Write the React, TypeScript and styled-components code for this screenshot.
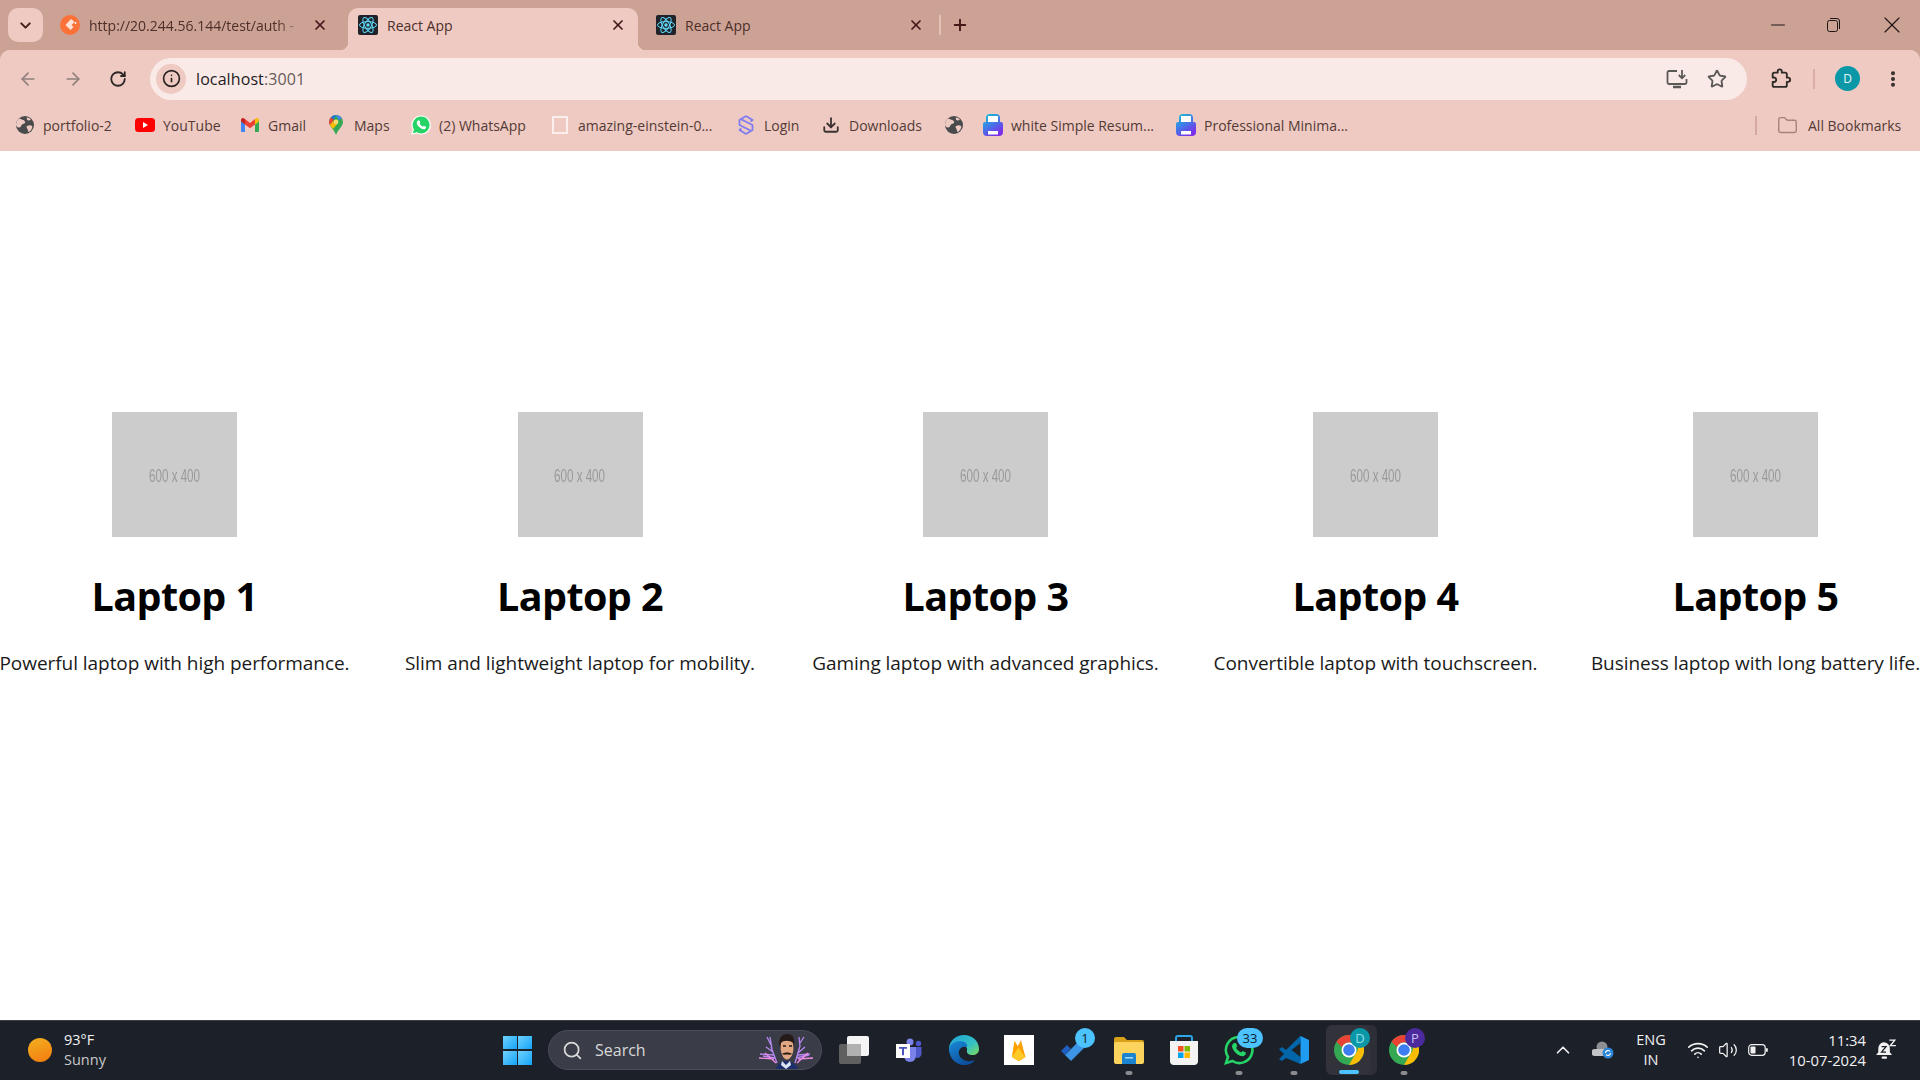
import React from "react";
import styled, { createGlobalStyle } from "styled-components";
import {
  ArrowLeft, ArrowRight, RotateCw, Star, X, Plus, Minus, Info, ChevronDown, ChevronUp,
  Search as SearchIcon, Wifi, Volume2, Download, Folder, MoreVertical,
} from "lucide-react";

const UI = `"Open Sans", "Noto Sans", sans-serif`;

const Global = createGlobalStyle`
  html, body { margin: 0; padding: 0; background: #fff; overflow: hidden; }
  * { box-sizing: border-box; }
  body { font-family: ${UI}; }
`;

const Screen = styled.div`
  width: 1920px; height: 1080px; display: flex; flex-direction: column; overflow: hidden;
`;

/* ---------- tab strip ---------- */
const TabStrip = styled.div`
  height: 50px; background: #cca295; display: flex; align-items: flex-end; padding-left: 8px; flex: none;
`;
const TabSearch = styled.div`
  width: 35px; height: 34px; margin: 0 7px 8px 0; border-radius: 10px; background: #eecac2;
  display: flex; align-items: center; justify-content: center; color: #44211c;
`;
const Tab = styled.div<{ $active?: boolean }>`
  position: relative; width: 290px; height: 42px; margin-right: 8px; padding: 0 12px 8px 10px;
  display: flex; align-items: center; gap: 9px; border-radius: 10px 10px 0 0;
  background: ${(p) => (p.$active ? "#eecac2" : "transparent")};
  ${(p) => p.$active && `
    &::before, &::after { content: ""; position: absolute; bottom: 0; width: 8px; height: 8px; }
    &::before { left: -8px; background: radial-gradient(circle at 0 0, transparent 8px, #eecac2 8.5px); }
    &::after { right: -8px; background: radial-gradient(circle at 100% 0, transparent 8px, #eecac2 8.5px); }
  `}
`;
const TabTitle = styled.span<{ $fade?: boolean }>`
  flex: 1; font-size: 14px; color: #4d2f2a; white-space: nowrap; overflow: hidden; min-width: 0;
  ${(p) => p.$fade && `-webkit-mask-image: linear-gradient(90deg, #000 88%, transparent 100%); mask-image: linear-gradient(90deg, #000 88%, transparent 100%);`}
`;
const TabClose = styled.span`
  display: flex; width: 16px; color: #45191a; justify-content: center;
`;
const TabSep = styled.div`
  width: 2px; height: 20px; background: #e3bfb6; margin: 0 0 15px -5px;
`;
const NewTab = styled.div`
  display: flex; color: #45191a; margin: 0 0 16px 10px;
`;
const WinControls = styled.div`
  margin-left: auto; display: flex; align-self: stretch; align-items: center; color: #1f1614; padding-right: 22px; gap: 43px;
`;
const WinBtn = styled.span`
  display: flex; width: 13px; height: 13px; align-items: center; justify-content: center;
  svg { flex: none; }
  &:last-child { margin-left: 2px; }
`;

/* ---------- toolbar ---------- */
const Toolbar = styled.div`
  height: 50px; background: #eecac2; display: flex; align-items: center; padding: 7px 0 0 5px; flex: none;
`;
const ToolbarTop = styled.div`
  background: #cca295; flex: none;
`;
const ToolbarShape = styled.div`
  background: #eecac2; border-radius: 10px 10px 0 0; overflow: hidden;
`;
const NavBtn = styled.div<{ $muted?: boolean }>`
  width: 45px; display: flex; justify-content: center; color: ${(p) => (p.$muted ? "#907f7b" : "#2c2624")};
`;
const Omnibox = styled.div`
  margin-left: 10px; width: 1597px; height: 42px; border-radius: 21px; background: #f9eae7;
  display: flex; align-items: center; padding: 0 20px 0 6px;
`;
const InfoChip = styled.div`
  width: 30px; height: 30px; border-radius: 50%; background: #eecac2; display: flex; align-items: center; justify-content: center;
  color: #2a2422; margin-right: 10px;
`;
const Url = styled.div`
  flex: 1; font-size: 16px; color: #1f1b22; letter-spacing: 0.1px;
  span { color: #675a58; }
`;
const OmniIcon = styled.div`
  width: 20px; margin-left: 20px; display: flex; justify-content: center; color: #5c5856;
  svg { flex: none; }
`;
const RightIcon = styled.div<{ $ml: number }>`
  width: 20px; margin-left: ${(p) => p.$ml}px; display: flex; justify-content: center; color: #2e2a28;
`;
const ToolSep = styled.div`
  width: 2px; height: 20px; background: #d9aea4; margin-left: 22px;
`;
const Avatar = styled.div`
  width: 25px; height: 25px; border-radius: 50%; background: #0a98a8; color: #e9f8f8; font-size: 12px;
  display: flex; align-items: center; justify-content: center; margin-left: 20px;
`;

/* ---------- bookmarks ---------- */
const Bookmarks = styled.div`
  height: 51px; background: #eecac2; display: flex; align-items: center; padding: 0 0 1px 15px; flex: none;
`;
const Bookmark = styled.div<{ $w: number }>`
  width: ${(p) => p.$w}px; display: flex; align-items: center; gap: 8px; flex: none;
  font-size: 14px; color: #543a36; white-space: nowrap;
`;
const BmIcon = styled.span`
  width: 20px; height: 20px; display: flex; align-items: center; justify-content: center; flex: none;
`;
const BmSep = styled.div`
  width: 2px; height: 19px; background: #d4a99f; margin-left: auto; margin-right: 20px;
`;
const AllBm = styled.div`
  display: flex; align-items: center; gap: 10px; width: 143px; font-size: 14px; color: #543a36;
  svg { color: #a5837b; }
`;

/* ---------- page ---------- */
const Main = styled.main`
  flex: 1; display: flex; justify-content: space-between; align-items: flex-start; padding-top: 261px; background: #fff;
`;
const Card = styled.article<{ $w: number }>`
  width: ${(p) => p.$w}px; flex: none; display: flex; flex-direction: column; align-items: center; text-align: center;
`;
const Placeholder = styled.div`
  width: 125px; height: 125px; background: #cccccc; color: #999999; display: flex; align-items: center; justify-content: center;
  font-family: "Liberation Sans", sans-serif; font-size: 18px;
  span { display: block; transform: scaleX(0.645); white-space: nowrap; margin-top: 3px; }
`;
const CardTitle = styled.h2`
  margin: 32px 0 0; font-size: 39.5px; line-height: 54px; font-weight: 700; color: #000; white-space: nowrap; letter-spacing: -0.6px;
`;
const CardText = styled.p`
  margin: 27px 0 0; font-size: 19px; line-height: 27px; color: #1a1a1a; white-space: nowrap; letter-spacing: -0.05px;
`;

/* ---------- taskbar ---------- */
const Taskbar = styled.footer`
  height: 60px; flex: none; background: #1c2029; border-top: 1px solid #3b3e46; display: flex; align-items: center; padding-bottom: 1px;
`;
const Weather = styled.div`
  display: flex; align-items: center; width: 490px; padding-left: 28px; gap: 12px; flex: none;
`;
const Sun = styled.div`
  width: 24px; height: 24px; border-radius: 50%; background: linear-gradient(160deg, #f2b01f, #f47a10);
`;
const WeatherText = styled.div`
  font-size: 14.5px; line-height: 20px; color: #f2f2f2; padding-bottom: 1px;
  small { display: block; font-size: 14.5px; color: #c8c8c8; }
`;
const StartCell = styled.div`
  width: 58px; display: flex; justify-content: center; padding-right: 3px; flex: none;
`;
const StartGrid = styled.div`
  width: 29px; height: 29px; display: grid; grid-template-columns: 1fr 1fr; gap: 1.5px;
  i { display: block; background: linear-gradient(135deg, #6fd2fb, #15a3f8); }
`;
const SearchBox = styled.div`
  width: 274px; height: 40px; border-radius: 20px; background: #3a3d47; border: 1px solid #4b4e57; display: flex; align-items: center;
  padding-left: 13px; color: #d8d8d8; font-size: 16px; gap: 12px; flex: none; overflow: hidden;
`;
const Tesla = styled.span`
  margin-left: auto; display: flex; margin-right: 6px;
`;
const Apps = styled.div`
  display: flex; align-items: center; margin-left: 4px; height: 100%; flex: none;
`;
const AppCell = styled.div<{ $active?: boolean }>`
  position: relative; width: 55px; height: 100%; display: flex; align-items: center; justify-content: center;
  ${(p) => p.$active && `
    &::before { content: ""; position: absolute; left: 7px; width: 49px; top: 4px; bottom: 4px; border-radius: 6px; background: #2e2f36; }
    &::after { content: ""; position: absolute; left: 5px; width: 44px; top: 4px; bottom: 4px; border-radius: 6px; background: #32333a; }
  `}
  svg { position: relative; z-index: 1; }
`;
const Running = styled.span<{ $active?: boolean }>`
  position: absolute; z-index: 2; bottom: ${(p) => (p.$active ? 5 : 4)}px; height: 4px; border-radius: 2px; left: 50%; transform: translateX(-50%);
  width: ${(p) => (p.$active ? 20 : 7)}px; background: ${(p) => (p.$active ? "#4cc2ff" : "#8a8b8e")};
`;
const Badge = styled.span<{ $bg: string; $color?: string; $wide?: boolean }>`
  position: absolute; z-index: 2; top: 7px; right: ${(p) => (p.$wide ? "3px" : "6px")}; height: 20px; min-width: ${(p) => (p.$wide ? "26px" : "20px")};
  border-radius: 10px; background: ${(p) => p.$bg}; color: ${(p) => p.$color || "#10202c"}; font-size: 13px;
  display: flex; align-items: center; justify-content: center;
`;
const Tray = styled.div`
  margin-left: auto; display: flex; align-items: center; color: #f2f2f2; flex: none; height: 100%; padding-right: 14px;
`;
const TrayIcon = styled.span<{ $w: number }>`
  width: ${(p) => p.$w}px; display: flex; justify-content: center;
  svg { flex: none; }
`;
const Lang = styled.div`
  width: 50px; text-align: center; font-size: 14.5px; line-height: 20px; color: #f2f2f2;
`;
const Clock = styled.div`
  width: 86px; text-align: right; font-size: 14.8px; line-height: 20px; color: #f2f2f2; white-space: nowrap; padding-bottom: 1px;
  display: flex; flex-direction: column; align-items: flex-end;
`;

/* ---------- drawings ---------- */
const ReactFav = () => (
  <svg width="20" height="20" viewBox="0 0 20 20">
    <rect width="20" height="20" rx="2" fill="#20232a" />
    <g fill="none" stroke="#61dafb" strokeWidth="1">
      <ellipse cx="10" cy="10" rx="8.5" ry="3.4" />
      <ellipse cx="10" cy="10" rx="8.5" ry="3.4" transform="rotate(60 10 10)" />
      <ellipse cx="10" cy="10" rx="8.5" ry="3.4" transform="rotate(120 10 10)" />
    </g>
    <circle cx="10" cy="10" r="1.7" fill="#61dafb" />
  </svg>
);
const OrangeFav = () => (
  <svg width="20" height="20" viewBox="0 0 20 20">
    <circle cx="10" cy="10" r="10" fill="#fb7239" />
    <path d="M11 4 5.5 10l5 5 3-3-2-2 3-3z" fill="#fde3d6" />
    <path d="M13 3l6 7-6 6 2 1 5-7-5-8z" fill="#fb7239" />
    <circle cx="15.5" cy="8" r="1" fill="#fff" />
  </svg>
);
const Globe = () => (
  <svg width="20" height="20" viewBox="0 0 20 20">
    <circle cx="10" cy="10" r="9" fill="#494b4d" />
    <path d="M4 3.500c2 1 5 1 6 3s-2 2-3 3-1 3-3 3-3-2-3-3 1-4.500 3-6zM12 11c2-1 4-1 5 0s-1 5-3 6c-1 0-1-2-1.500-3s-1.500-2-.5-3zM12 2.500c2 0 3 1 4 2.500l-3 .5c-1-.5-1.500-2-1-3z" fill="#eecac2" />
  </svg>
);
const YouTube = () => (
  <svg width="20" height="14" viewBox="0 0 20 14">
    <rect width="20" height="14" rx="3.500" fill="#f00" />
    <path d="M8 4l5 3-5 3z" fill="#fff" />
  </svg>
);
const Gmail = () => (
  <svg width="18" height="14" viewBox="0 0 18 14">
    <path d="M0 2.500V13a1 1 0 0 0 1 1h3V6.500z" fill="#4285f4" />
    <path d="M18 2.500V13a1 1 0 0 1-1 1h-3V6.500z" fill="#34a853" />
    <path d="M14 1v5.500l4-3V2c0-1.800-2-2.500-3-1.500z" fill="#fbbc04" />
    <path d="M4 6.500V1l5 4 5-4v5.500L9 10.300z" fill="#ea4335" />
    <path d="M0 2v1.500l4 3V1L3 .500C2-.500 0 .200 0 2z" fill="#c5221f" />
  </svg>
);
const Maps = () => (
  <svg width="14" height="20" viewBox="0 0 14 20">
    <path d="M7 0a7 7 0 0 1 7 7c0 4.500-5 7-7 13C5 14 0 11.500 0 7a7 7 0 0 1 7-7z" fill="#34a853" />
    <path d="M2 2.200A7 7 0 0 1 7 0l-2.300 4.700-2.500-2z" fill="#1a73e8" />
    <path d="M7 0a7 7 0 0 1 6 3.500L9.500 5z" fill="#4285f4" />
    <path d="M2 2.200 5 5 .8 10A7 7 0 0 1 2 2.200z" fill="#ea4335" />
    <path d="M.8 10 5 5a2.500 2.500 0 1 0 4 3l-5 6c-1-1.500-2.400-2.500-3.200-4z" fill="#fbbc04" />
    <circle cx="7" cy="7" r="2.400" fill="#fdd86a" />
  </svg>
);
const WhatsAppMini = () => (
  <svg width="20" height="20" viewBox="0 0 20 20">
    <path d="M10 1a9 9 0 0 0-7.700 13.500L1 19l4.700-1.200A9 9 0 1 0 10 1z" fill="#25d366" stroke="#fff" strokeWidth="1.200" />
    <path d="M7.300 5.500c-.5 0-1.500.8-1.500 2.200s1 3 2.500 4.400 3.300 2.200 4.500 2.200 2.200-1 2.200-1.800v-.7l-2.200-1.100-.9 1.100c-1-.4-2.800-2-3.300-3.200l.8-1-.9-2.100z" fill="#fff" />
  </svg>
);
const Blank = () => (
  <svg width="16" height="18" viewBox="0 0 16 18"><rect x="1" y="1" width="14" height="16" fill="none" stroke="#fbf3f1" strokeWidth="1.800" /></svg>
);
const LoginFav = () => (
  <svg width="16" height="20" viewBox="0 0 16 20" fill="none" stroke="#7f7cf0" strokeWidth="1.800" strokeLinejoin="round">
    <path d="M8 1 1.500 5v5l11 5.500M8 19l6.500-4v-5L3.500 4.500" />
    <path d="M8 1l6.500 4-2 1.500M8 19l-6.500-4 2-1.500" />
  </svg>
);
const DocFav = () => (
  <svg width="20" height="22" viewBox="0 0 20 22">
    <defs>
      <linearGradient id="df" x1="0" y1="0" x2="0.6" y2="1">
        <stop offset="0" stopColor="#14c8d0" />
        <stop offset="0.5" stopColor="#3d7fe8" />
        <stop offset="1" stopColor="#7c2fe8" />
      </linearGradient>
    </defs>
    <path d="M3 8V4a4 4 0 0 1 4-4h6a4 4 0 0 1 4 4v4h1a2 2 0 0 1 2 2v8a4 4 0 0 1-4 4H4a4 4 0 0 1-4-4v-8a2 2 0 0 1 2-2z" fill="url(#df)" />
    <rect x="5" y="2" width="10" height="6" fill="#fff" />
    <rect x="5" y="17" width="10" height="3.500" fill="#fff" />
  </svg>
);
const InstallIcon = () => (
  <svg width="22" height="20" viewBox="0 0 22 20" fill="none" stroke="currentColor" strokeWidth="1.800">
    <path d="M11 2H3a1.500 1.500 0 0 0-1.500 1.500v10A1.500 1.500 0 0 0 3 15h16a1.500 1.500 0 0 0 1.500-1.500V10" />
    <path d="M7 18h8" strokeWidth="2.500" />
    <path d="M16 1v8M12.800 6l3.200 3.300L19.200 6" />
  </svg>
);
const PuzzleIcon = () => (
  <svg width="21" height="21" viewBox="0 0 24 24" fill="none" stroke="currentColor" strokeWidth="2.200" strokeLinejoin="round">
    <path d="M20.500 11H19V7a2 2 0 0 0-2-2h-4V3.500a2.500 2.500 0 0 0-5 0V5H4a2 2 0 0 0-2 2v3.800h1.500a2.700 2.700 0 0 1 0 5.400H2V20a2 2 0 0 0 2 2h13a2 2 0 0 0 2-2v-4h1.500a2.500 2.500 0 0 0 0-5z" />
  </svg>
);
const TeslaArt = () => (
  <svg width="58" height="38" viewBox="0 0 58 38" fill="none">
    <g stroke="#b88af5" strokeWidth="1.300">
      <path d="M20 32 14 16M16 21l-7-5M15 18l-2-12M18 27 6 25M17 24l-14-1M14 14l-4-8" />
      <path d="M38 32l5-17M41 22l7-6M43 16l-1-10M39 27l13-3M41 24l12-1M43 12l4-6" />
    </g>
    <g stroke="#f08ce8" strokeWidth="1.300">
      <path d="M19 32 8 22M40 32l11-10M17 28 2 27M41 28l15-1" />
    </g>
    <path d="M19 38c1-5 5-8 10-8s11 3 12 8z" fill="#1c2f6b" />
    <path d="M25 30l4 4 4-4 1 4-5 4-5-4z" fill="#dbe4f5" />
    <path d="M22 13c0-7 4-10 8-10 5 0 8 3 7 10l-1 5c-2-4-2-8-6-8s-5 3-6 8z" fill="#241a18" />
    <path d="M24 12c2-3 9-3 12 0 1 6 0 12-3 15-2 2-4 2-6 0-3-3-4-10-3-15z" fill="#e1a883" />
    <path d="M25 23c2-2 8-2 10 0-2 1-3 .500-5 .500s-3 .5-5-.5z" fill="#2a1a14" />
    <path d="M26 15h3M32 15h3" stroke="#241a18" strokeWidth="1.400" />
  </svg>
);
const TaskView = () => (
  <svg width="30" height="28" viewBox="0 0 30 28">
    <rect x="0" y="8" width="22" height="20" rx="2" fill="#606060" />
    <rect x="8" y="0" width="22" height="20" rx="2" fill="#f4f4f4" />
    <rect x="8" y="8" width="14" height="12" fill="#b0b0b0" />
  </svg>
);
const Teams = () => (
  <svg width="26" height="24" viewBox="0 0 26 24">
    <circle cx="14" cy="4" r="3.500" fill="#7b83eb" />
    <circle cx="22.500" cy="5.500" r="2.700" fill="#5059c9" />
    <path d="M18 9h7.500v7a4 4 0 0 1-5.500 3.600z" fill="#5059c9" />
    <path d="M8 9h12v9a6 6 0 0 1-12 0z" fill="#7b83eb" />
    <rect x="0" y="6" width="14" height="14" fill="#fff" />
    <path d="M3 9h8v1.800H8v6.500H6v-6.500H3z" fill="#4b53bc" />
  </svg>
);
const Edge = () => (
  <svg width="30" height="30" viewBox="0 0 30 30">
    <defs>
      <linearGradient id="eg" x1="0" y1="0" x2="1" y2="1">
        <stop offset="0" stopColor="#1fa2d8" />
        <stop offset="0.6" stopColor="#35c1c4" />
        <stop offset="1" stopColor="#7edb5a" />
      </linearGradient>
      <linearGradient id="eb" x1="0" y1="0" x2="0.6" y2="1">
        <stop offset="0" stopColor="#1a8ad8" />
        <stop offset="1" stopColor="#0c4f9c" />
      </linearGradient>
    </defs>
    <path d="M15 0c9 0 15 6.500 15 14 0 4-3 6-6.500 6S17 18 18 15c.5-2-1-4-4-4-5 0-9 3-11 7-2 0-3-2-3-4C0 6 7 0 15 0z" fill="url(#eg)" />
    <path d="M0 14c1-5 6-8 11-8 5 0 8 3 7 6-3-1-7 0-8 4s2 9 8 10c3 .500 6 0 8-1-2 3-6 5-11 5C7 30 0 23 0 14z" fill="url(#eb)" />
  </svg>
);
const Firebase = () => (
  <svg width="30" height="30" viewBox="0 0 30 30">
    <rect width="30" height="30" fill="#fff" />
    <path d="M8 22 10.500 6l4 6.500z" fill="#ffc24a" />
    <path d="M8 22 17 5l4 17-6.500 4z" fill="#f4a422" />
    <path d="M8 22l2.500-16 4 6.500L17 8l4.500 14-6.500 4z" fill="#ffa000" />
    <path d="M8 22l6.500-9.500L21 22l-6.500 3.800z" fill="#ffca28" />
  </svg>
);
const ToDo = () => (
  <svg width="26" height="22" viewBox="0 0 26 22">
    <path d="M0 12 6 6l3.500 3.500L4 16z" fill="#1f5fc4" />
    <path d="M4 16 20 0l6 6L10 22z" fill="#3c94e6" />
  </svg>
);
const FolderIcon = () => (
  <svg width="30" height="28" viewBox="0 0 30 28">
    <path d="M0 3a2 2 0 0 1 2-2h8l3 3h15a2 2 0 0 1 2 2v4H0z" fill="#d9a01a" />
    <rect y="6" width="30" height="22" rx="2" fill="#fcd35c" />
    <path d="M8 19a2 2 0 0 1 2-2h10a2 2 0 0 1 2 2v9H8z" fill="#1b84d1" />
    <rect x="11" y="21" width="8" height="1.600" fill="#9fd6f7" />
  </svg>
);
const Store = () => (
  <svg width="30" height="30" viewBox="0 0 30 30">
    <path d="M7 6V3a2 2 0 0 1 2-2h12a2 2 0 0 1 2 2v3" fill="none" stroke="#2aa6e8" strokeWidth="2" />
    <path d="M1 6h28v20a4 4 0 0 1-4 4H5a4 4 0 0 1-4-4z" fill="#f3f3f3" />
    <rect x="9" y="11" width="5.500" height="5.500" fill="#f25022" />
    <rect x="15.500" y="11" width="5.500" height="5.500" fill="#7fba00" />
    <rect x="9" y="17.500" width="5.500" height="5.500" fill="#00a4ef" />
    <rect x="15.500" y="17.500" width="5.500" height="5.500" fill="#ffb900" />
  </svg>
);
const WhatsAppBig = () => (
  <svg width="30" height="30" viewBox="0 0 30 30" fill="none">
    <path d="M15 2a13 13 0 0 0-11 20L2 28l6.500-2A13 13 0 1 0 15 2z" stroke="#25d366" strokeWidth="2.600" />
    <path d="M10.500 8c-1 0-2.500 1.300-2.500 3.300s1.500 4.500 3.800 6.700 5 3.300 6.700 3.300 3.300-1.500 3.300-2.700v-1.100l-3.300-1.600-1.400 1.600c-1.500-.6-4.200-3-5-4.800l1.200-1.500-1.300-3.200z" fill="#25d366" />
  </svg>
);
const VSCode = () => (
  <svg width="30" height="30" viewBox="0 0 30 30">
    <path d="M21.500 1 30 5v20l-8.500 4L7 15.500z" fill="#1f9cf0" />
    <path d="M21.500 1 7 15l-4-3-3 2 5 5-5 5 3 2 4-3L21.500 29 22 22l-9-7 9-7z" fill="#0065a9" />
    <path d="M21.500 8v14l-9-7z" fill="#1c2024" />
  </svg>
);
const Chrome = () => (
  <svg width="30" height="30" viewBox="0 0 30 30">
    <circle cx="15" cy="15" r="15" fill="#34a853" />
    <path d="M15 0a15 15 0 0 1 13 7.500H15a7.500 7.500 0 0 0-7 4.800L2.500 6.800A15 15 0 0 1 15 0z" fill="#ea4335" />
    <path d="M28 7.500A15 15 0 0 1 15 30l6.500-11.300a7.500 7.500 0 0 0 0-11.200z" fill="#fbbc04" />
    <circle cx="15" cy="15" r="7.500" fill="#fff" />
    <circle cx="15" cy="15" r="5.800" fill="#3d7df0" />
  </svg>
);
const OneDrive = () => (
  <svg width="22" height="18" viewBox="0 0 22 18">
    <circle cx="10" cy="6" r="5.500" fill="#8d8f93" />
    <path d="M3 15a3.500 3.500 0 0 1 0-7h12a3.500 3.500 0 0 1 0 7z" fill="#c2c3c6" />
    <circle cx="16" cy="12" r="5.500" fill="#2b86d9" />
    <path d="M13.500 12a2.500 2.500 0 0 1 4.500-1.500M18.500 12a2.500 2.500 0 0 1-4.500 1.500" fill="none" stroke="#fff" strokeWidth="1.100" />
  </svg>
);
const BatteryIcon = () => (
  <svg width="20" height="12" viewBox="0 0 20 12" fill="none">
    <rect x="0.700" y="0.700" width="16.500" height="10.600" rx="3" stroke="#f2f2f2" strokeWidth="1.200" />
    <rect x="2.500" y="2.500" width="5" height="7" rx="1" fill="#f2f2f2" />
    <rect x="18" y="4" width="1.800" height="4" rx="0.900" fill="#f2f2f2" />
  </svg>
);
const BellZ = () => (
  <svg width="20" height="22" viewBox="0 0 18 20">
    <path d="M7 3a5.500 5.500 0 0 1 5.500 5.500V12l2 2.500H0L2 12V8.500A5.500 5.500 0 0 1 7 3z" fill="#f2f2f2" />
    <rect x="5" y="16" width="5" height="2" rx="1" fill="#f2f2f2" />
    <path d="M5 7h4l-4 5h4" fill="none" stroke="#1c2029" strokeWidth="1.200" />
    <path d="M12 1h5l-4 5h5" fill="none" stroke="#f2f2f2" strokeWidth="1.300" />
  </svg>
);
const RestoreIcon = () => (
  <svg width="13" height="14" viewBox="0 0 13 14" fill="none" stroke="currentColor" strokeWidth="1">
    <rect x="0.500" y="2.500" width="10" height="11" rx="2" />
    <path d="M3 .500h7a2.500 2.500 0 0 1 2.500 2.500v8" />
  </svg>
);

const bookmarks: { w: number; icon: React.ReactNode; label?: string }[] = [
  { w: 120, icon: <Globe />, label: "portfolio-2" },
  { w: 105, icon: <YouTube />, label: "YouTube" },
  { w: 86, icon: <Gmail />, label: "Gmail" },
  { w: 85, icon: <Maps />, label: "Maps" },
  { w: 139, icon: <WhatsAppMini />, label: "(2) WhatsApp" },
  { w: 186, icon: <Blank />, label: "amazing-einstein-0..." },
  { w: 85, icon: <LoginFav />, label: "Login" },
  { w: 123, icon: <Download size={18} color="#3a3230" strokeWidth={2.4} />, label: "Downloads" },
  { w: 39, icon: <Globe /> },
  { w: 193, icon: <DocFav />, label: "white Simple Resum..." },
  { w: 190, icon: <DocFav />, label: "Professional Minima..." },
];

const laptops = [
  { w: 349, name: "Laptop 1", text: "Powerful laptop with high performance." },
  { w: 355, name: "Laptop 2", text: "Slim and lightweight laptop for mobility." },
  { w: 349, name: "Laptop 3", text: "Gaming laptop with advanced graphics." },
  { w: 324, name: "Laptop 4", text: "Convertible laptop with touchscreen." },
  { w: 329, name: "Laptop 5", text: "Business laptop with long battery life." },
];

export default function App() {
  return (
    <Screen>
      <Global />
      <TabStrip>
        <TabSearch><ChevronDown size={17} strokeWidth={2.8} /></TabSearch>
        <Tab>
          <OrangeFav />
          <TabTitle $fade>http://20.244.56.144/test/auth -</TabTitle>
          <TabClose><X size={16} strokeWidth={2.6} /></TabClose>
        </Tab>
        <Tab $active>
          <ReactFav />
          <TabTitle>React App</TabTitle>
          <TabClose><X size={16} strokeWidth={2.6} /></TabClose>
        </Tab>
        <Tab>
          <ReactFav />
          <TabTitle>React App</TabTitle>
          <TabClose><X size={16} strokeWidth={2.6} /></TabClose>
        </Tab>
        <TabSep />
        <NewTab><Plus size={18} strokeWidth={2.6} /></NewTab>
        <WinControls>
          <WinBtn><Minus size={22} strokeWidth={1.2} /></WinBtn>
          <WinBtn><RestoreIcon /></WinBtn>
          <WinBtn><X size={28} strokeWidth={1} /></WinBtn>
        </WinControls>
      </TabStrip>
      <ToolbarTop>
        <ToolbarShape>
          <Toolbar>
            <NavBtn $muted><ArrowLeft size={20} strokeWidth={2} /></NavBtn>
            <NavBtn $muted><ArrowRight size={20} strokeWidth={2} /></NavBtn>
            <NavBtn><RotateCw size={18} strokeWidth={2.4} /></NavBtn>
            <Omnibox>
              <InfoChip><Info size={19} strokeWidth={2.1} /></InfoChip>
              <Url>localhost<span>:3001</span></Url>
              <OmniIcon><InstallIcon /></OmniIcon>
              <OmniIcon><Star size={20} strokeWidth={2.2} /></OmniIcon>
            </Omnibox>
            <RightIcon $ml={24}><PuzzleIcon /></RightIcon>
            <ToolSep />
            <Avatar>D</Avatar>
            <RightIcon $ml={23}><MoreVertical size={20} strokeWidth={2.8} /></RightIcon>
          </Toolbar>
          <Bookmarks>
            {bookmarks.map((b, i) => (
              <Bookmark key={i} $w={b.w}>
                <BmIcon>{b.icon}</BmIcon>
                {b.label}
              </Bookmark>
            ))}
            <BmSep />
            <AllBm><Folder size={21} strokeWidth={1.6} />All Bookmarks</AllBm>
          </Bookmarks>
        </ToolbarShape>
      </ToolbarTop>
      <Main>
        {laptops.map((l) => (
          <Card key={l.name} $w={l.w}>
            <Placeholder><span>600 x 400</span></Placeholder>
            <CardTitle>{l.name}</CardTitle>
            <CardText>{l.text}</CardText>
          </Card>
        ))}
      </Main>
      <Taskbar>
        <Weather>
          <Sun />
          <WeatherText>93°F<small>Sunny</small></WeatherText>
        </Weather>
        <StartCell><StartGrid><i /><i /><i /><i /></StartGrid></StartCell>
        <SearchBox>
          <SearchIcon size={21} strokeWidth={2} />
          Search
          <Tesla><TeslaArt /></Tesla>
        </SearchBox>
        <Apps>
          <AppCell><TaskView /></AppCell>
          <AppCell><Teams /></AppCell>
          <AppCell><Edge /></AppCell>
          <AppCell><Firebase /></AppCell>
          <AppCell><ToDo /><Badge $bg="#4cc2ff">1</Badge></AppCell>
          <AppCell><FolderIcon /><Running /></AppCell>
          <AppCell><Store /></AppCell>
          <AppCell><WhatsAppBig /><Badge $bg="#4cc2ff" $wide>33</Badge><Running /></AppCell>
          <AppCell><VSCode /><Running /></AppCell>
          <AppCell $active><Chrome /><Badge $bg="#0a98a8" $color="#8fdfe6">D</Badge><Running $active /></AppCell>
          <AppCell><Chrome /><Badge $bg="#4a2a9c" $color="#cdbdf5">P</Badge><Running /></AppCell>
        </Apps>
        <Tray>
          <TrayIcon $w={34}><ChevronUp size={22} strokeWidth={1.8} /></TrayIcon>
          <TrayIcon $w={46}><OneDrive /></TrayIcon>
          <Lang>ENG<br />IN</Lang>
          <TrayIcon $w={44}><Wifi size={22} strokeWidth={1.8} /></TrayIcon>
          <TrayIcon $w={16}><Volume2 size={20} strokeWidth={1.5} /></TrayIcon>
          <TrayIcon $w={44}><BatteryIcon /></TrayIcon>
          <Clock><span>11:34</span><span>10-07-2024</span></Clock>
          <TrayIcon $w={40}><BellZ /></TrayIcon>
        </Tray>
      </Taskbar>
    </Screen>
  );
}
